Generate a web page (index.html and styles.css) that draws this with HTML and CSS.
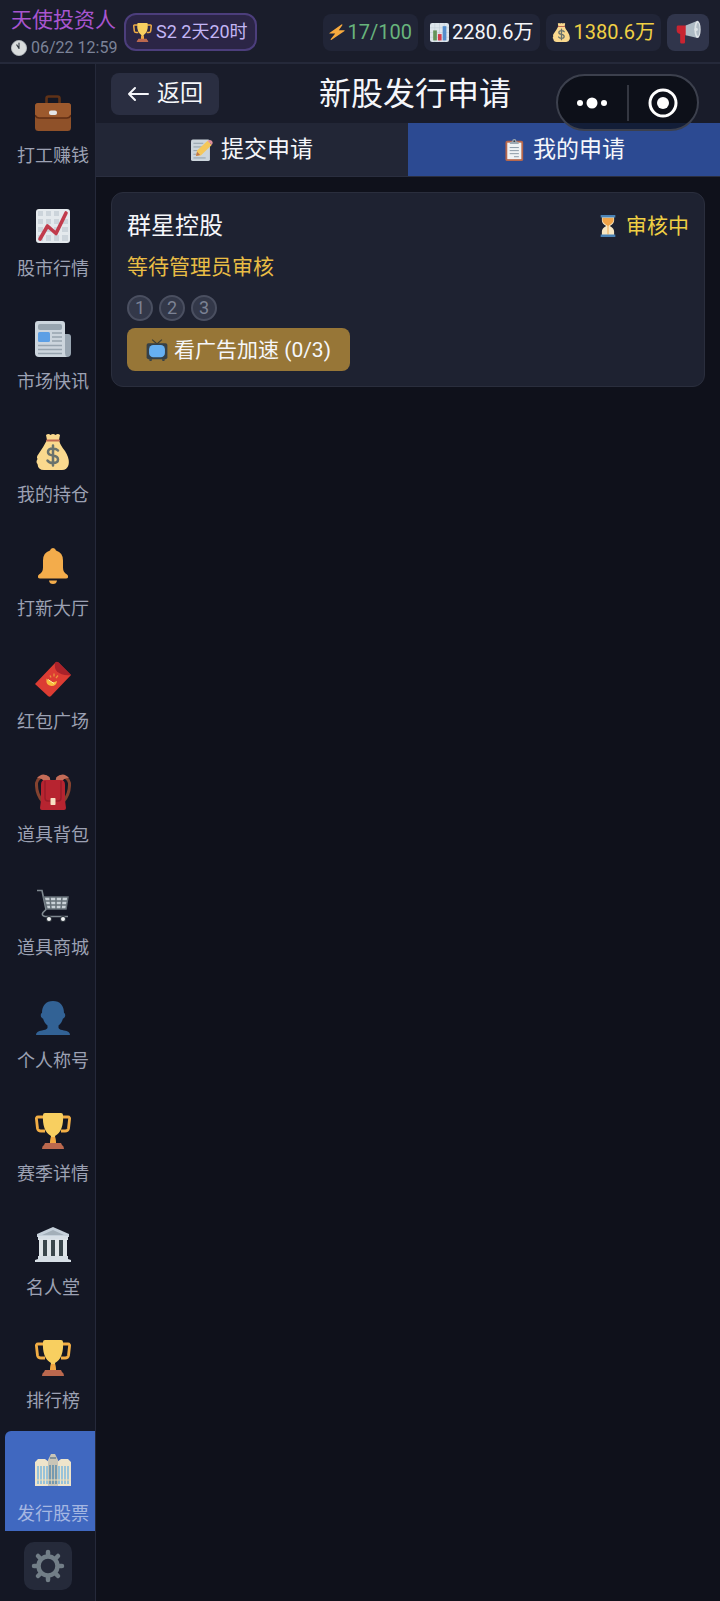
FILE: index.html
```html
<!DOCTYPE html>
<html lang="zh-CN">
<head>
<meta charset="utf-8">
<meta name="viewport" content="width=device-width, initial-scale=1">
<title>新股发行申请</title>
<link rel="stylesheet" href="styles.css">
</head>
<body>
<svg class="sprite" aria-hidden="true">
  <symbol id="briefcase" viewBox="0 0 36 36">
    <path d="M11.500 9V3.500q0-2 2-2h9q2 0 2 2V9" fill="none" stroke="#5f3217" stroke-width="2.600"/>
    <rect y="8" width="36" height="28" rx="3.500" fill="#8f5129"/>
    <path d="M0 11q0-3 3.500-3h29q3.500 0 3.500 3v9q-1 3-4 3H4q-3 0-4-3z" fill="#9c592d"/>
    <path d="M0 20q1 3 4 3h28q3 0 4-3" fill="none" stroke="#5f2d13" stroke-width="1.600"/>
    <rect x="14" y="15.500" width="8" height="4.500" rx="2" fill="#e4e6e8"/>
  </symbol>
  <symbol id="chart" viewBox="0 0 36 36">
    <rect x="1" y="1" width="34" height="34" rx="3" fill="#e4e9ed"/>
    <path d="M3 3h5v5H3zm8 0h5v5h-5zm8 0h5v5h-5zM3 11h5v5H3zm8 0h5v5h-5zm8 0h5v5h-5zm8 0h6v5h-6zM3 19h5v5H3zm8 0h5v5h-5zm8 0h5v5h-5zm8 0h6v5h-6zM3 27h5v6H3zm8 0h5v6h-5zm8 0h5v6h-5zm8 0h6v6h-6z" fill="#ccd4db"/>
    <path d="M5 31l7.500-13 8.500 7.500L31 5" fill="none" stroke="#c13b4c" stroke-width="3.600" stroke-linecap="round" stroke-linejoin="round"/>
  </symbol>
  <symbol id="news" viewBox="0 0 36 36">
    <path d="M26 13h7q3 0 3 3v16q0 4-4 4h-8z" fill="#98a5b1"/>
    <path d="M3 0h24q3 0 3 3v29q0 3 2 4H4q-4 0-4-4V3q0-3 3-3z" fill="#ccd5dd"/>
    <rect x="3" y="3" width="24" height="6" rx="2" fill="#97a4af"/>
    <rect x="3" y="11" width="12" height="10" rx="1.500" fill="#5c9fe5"/>
    <path d="M17 12h10M17 16h10M17 20h10M3 24.500h24M3 28.500h24M3 32.500h24" stroke="#97a4af" stroke-width="1.500"/>
  </symbol>
  <symbol id="bag" viewBox="0 0 36 36">
    <path d="M12 6L11 1q2.500-2 4.500 0 2.500-2 5 0 2.500-2 4.500 0l-1 5q1 5 6 11 5 8 3.500 14-1.500 5-6.500 5H9q-6 0-6.500-6-2-2 0-5-1.500-2 1-5 5-7 8.500-14z" fill="#fad98e"/>
    <path d="M12 6.500h12" stroke="#bf6952" stroke-width="2" stroke-linecap="round"/>
    <path d="M23 16.500q-1.500-2-5-2-5 0-5 3.500 0 2.800 5 3.500t5 4q0 3.500-5 3.500-4 0-5.500-2.500M18 11.500v20" fill="none" stroke="#69726d" stroke-width="2.500" stroke-linecap="round"/>
  </symbol>
  <symbol id="bell" viewBox="0 0 36 36">
    <path d="M18 0q2.500 0 3 2.500 7 2 7 10v7q0 5 4 7 1.500 1 1 3-.5 1-2 1H5q-1.500 0-2-1-.5-2 1-3 4-2 4-7v-7q0-8 7-10Q15.500 0 18 0z" fill="#f3ac4b"/>
    <path d="M14 32.500h8q-.5 3.500-4 3.500t-4-3.500z" fill="#f3ac4b"/>
  </symbol>
  <symbol id="envelope" viewBox="0 0 36 36">
    <path d="M0 23L20 2q2-2 4 0l12 12L16 35q-1.500 1.500-3 0z" fill="#dc3c33"/>
    <path d="M20 2q1.500-2 3.500-.5L36 14q-9 1-14-3.500-3-3.500-2-8.500z" fill="#a9222a"/>
    <path d="M11.500 17.500q-1 7 5 7.500 5 0 5.500-5-3.500 2-6 .5-2.500-1-4.500-3z" fill="#f8bd3e"/>
    <path d="M15 14.500l1 2m3-4v3m4-1l-2 2.500" stroke="#e9923b" stroke-width="1.300"/>
    <path d="M13 18.500l6 4" stroke="#fff0a0"/>
  </symbol>
  <symbol id="backpack" viewBox="0 0 36 36">
    <path d="M8 28Q1 20 1.500 9 3 2 12 2.500M28 28q7-8 6.500-19Q33 2 24 2.500" fill="none" stroke="#84422f" stroke-width="3"/>
    <path d="M2 4q5-6 11-2 3 1 2 6H9Q8 4 2 4zM34 4q-5-6-11-2-3 1-2 6h6q1-4 7-4z" fill="#c46c58"/>
    <path d="M10 6h16q4 0 4 5v15l1 8q0 2-2 2H7q-2 0-2-2l1-8V11q0-5 4-5z" fill="#b72430"/>
    <path d="M10 7v17q0 3 3 3h10q3 0 3-3V7" fill="none" stroke="#981c28" stroke-width="1.400"/>
    <rect x="15.500" y="24" width="5" height="7" rx=".7" fill="#f7dfc3"/>
  </symbol>
  <symbol id="cart" viewBox="0 0 36 36">
    <path d="M2 3.500h5l4 19-3 3q-2 3 2 4h23" fill="none" stroke="#7f8990" stroke-width="1.600"/>
    <path d="M9 10h24l-2 12H12z" fill="#c8d0d6"/>
    <path d="M9 10h24l-2 12H12zM10 14h22M11 18h20M15 10l1 12m5-12v12m6-12l-1 12" fill="none" stroke="#667078" stroke-width="1.500"/>
    <circle cx="14" cy="32" r="3" fill="#343c43"/><circle cx="28" cy="32" r="3" fill="#343c43"/>
    <circle cx="14" cy="32" r="2" fill="#f2f4f5"/><circle cx="28" cy="32" r="2" fill="#f2f4f5"/>
  </symbol>
  <symbol id="person" viewBox="0 0 36 36">
    <path d="M18 1c7 0 11 4.500 11 12 2 .5 1.500 5-1 5.500-1 3.500-2.500 5.500-4.500 7V28c1 1.500 3 2 5.500 2.500 4 .5 6 2 6 4.500H1c0-2.500 2-4 6-4.500 2.500-.5 4.500-1 5.500-2.500v-2.500c-2-1.500-3.500-3.500-4.500-7-2.500-.5-3-5-1-5.500C7 5.500 11 1 18 1z" fill="#326295"/>
  </symbol>
  <symbol id="trophy" viewBox="0 0 36 36">
    <path d="M9 4H3Q1 4 1.500 6.500l1 9Q3 18 6 18h4M27 4h6q2 0 1.500 2.500l-1 9Q33 18 30 18h-4" fill="none" stroke="#f2ae45" stroke-width="2.800"/>
    <path d="M8 2q0-2 2-2h16q2 0 2 2 1 16-8 21l1 7h-6l1-7Q7 18 8 2z" fill="#f8cf60"/>
    <path d="M16 24h4l1 7h-6z" fill="#f2a640"/>
    <path d="M10 30h16l1 2q2 1 2 4H7q0-3 2-4z" fill="#bb684e"/>
  </symbol>
  <symbol id="museum" viewBox="0 0 36 36">
    <path d="M5 11h26v19H5z" fill="#3a464c"/>
    <path d="M18 0l16 7v3H2V7z" fill="#c5d0da"/>
    <path d="M18 3l11 5H7z" fill="#a3afb9"/>
    <path d="M3 9h30v4H3z" fill="#d7dfe6"/>
    <path d="M4 12h4v18H4zm8 0h4v18h-4zm8 0h4v18h-4zm8 0h4v18h-4z" fill="#dfe5e9"/>
    <path d="M3 29h30v3l3 1v2H0v-2l3-1z" fill="#d7dfe6"/>
  </symbol>
  <symbol id="offices" viewBox="0 0 36 36">
    <path d="M0 9l3-3h7l4 3v24H0zm22 0l4-3h7l3 3v24H22z" fill="#eee4cb"/>
    <path d="M3 13v18M6 13v18M9 13v18M12 13v18M24 13v18M27 13v18M30 13v18M33 13v18" stroke="#76b6de" stroke-width="1.400"/>
    <path d="M13 7l3-6h4l3 6v26H13z" fill="#c9c5b7"/>
    <path d="M15 12v19M18 12v19M21 12v19" stroke="#5b8cad" stroke-width="1.500"/>
    <path d="M0 27h36" stroke="#f1dfb7"/><path d="M15 5h6" stroke="#81909a" stroke-width="2"/>
  </symbol>
  <symbol id="gear" viewBox="0 0 36 36">
    <circle cx="18" cy="18" r="9.500" fill="none" stroke="#727e87" stroke-width="4.500"/>
    <path d="M18 6V4M18 30v2M6 18H4M30 18h2M9.500 9.500L8 8M26.500 26.500L28 28M9.500 26.500L8 28M26.500 9.500L28 8" stroke="#727e87" stroke-width="4.500" stroke-linecap="round"/>
  </symbol>
  <symbol id="clock" viewBox="0 0 36 36">
    <circle cx="18" cy="18" r="17" fill="#d9dcdd" stroke="#b3b9be" stroke-width="2"/>
    <path d="M18 19V7M18 19l-5-8" stroke="#303740" stroke-width="2.500" stroke-linecap="round"/>
  </symbol>
  <symbol id="bolt" viewBox="0 0 36 36">
    <path d="M28 1L1 20q-1 1 1 1.500h12L4 34q-1 3 2 1.500l29-20q1-1.500-1-1.500H22l8-11q1-3-2-2z" fill="#f8aa3e"/>
  </symbol>
  <symbol id="bars" viewBox="0 0 36 36">
    <rect width="36" height="36" rx="4" fill="#dde5eb"/>
    <path d="M0 9h36M0 18h36M0 27h36M9 0v36M18 0v36M27 0v36" stroke="#c0ccd6"/>
    <path d="M6 14h7v19H6z" fill="#65945a"/><path d="M15 21h7v12h-7z" fill="#d53c4c"/><path d="M24 6h7v27h-7z" fill="#538ccb"/>
  </symbol>
  <symbol id="megaphone" viewBox="0 0 36 36">
    <path d="M1 10q0-2 2-2h13v14h-3v10q0 2-2 2H8q-2 0-2-2V20q-5-1-5-5z" fill="#c92431"/>
    <path d="M14 8L31 1v25l-17-4z" fill="#aebbc5"/>
    <ellipse cx="31" cy="13.500" rx="4.500" ry="12.500" fill="#dde3e7"/>
    <ellipse cx="31.500" cy="13.500" rx="2.500" ry="9.500" fill="#b0bcc6"/><circle cx="29" cy="13.500" r="2.500" fill="#dde3e7"/>
  </symbol>
  <symbol id="memo" viewBox="0 0 36 36">
    <rect y="1" width="31" height="35" rx="3" fill="#ccd5dc"/>
    <path d="M4 7h16M4 13h14M4 19h9M4 25h4M4 31h20" stroke="#8c9aa5" stroke-width="1.500"/>
    <path d="M8 28l2-9L27 3l7 7-18 17z" fill="#f5c75a"/>
    <path d="M27 3q4-3 7 0t0 7z" fill="#dd8e9b"/><path d="M8 28l2-7 5 5z" fill="#bb7650"/>
  </symbol>
  <symbol id="clipboard" viewBox="0 0 36 36">
    <rect x="4" y="3" width="29" height="33" rx="3" fill="#b7674c"/>
    <path d="M7 6h23v27H7z" fill="#eff2f4"/>
    <path d="M11 8q0-4 4-4 0-4 3.500-4T22 4q4 0 4 4z" fill="#9da9b3"/><circle cx="18.500" cy="3.500" r="1.500" fill="#39424a"/>
    <path d="M11 14h15M11 19h15M11 24h15M18 29h8" stroke="#8998a5" stroke-width="1.600"/>
  </symbol>
  <symbol id="hourglass" viewBox="0 0 36 36">
    <path d="M8 3h20v6q0 5-7 9 7 4 7 9v6H8v-6q0-5 7-9-7-4-7-9z" fill="#f6e7c3"/>
    <path d="M9 5h18v4q0 4-9 9-9-5-9-9z" fill="#f0a347"/><path d="M18 15v17" stroke="#f0a347" stroke-width="1.500"/>
    <path d="M6 0h24v4H6zM6 32h24v4H6z" fill="#4a83b6"/>
  </symbol>
  <symbol id="tv" viewBox="0 0 36 36">
    <path d="M10 1l8 7 8-7" fill="none" stroke="#3b3c36" stroke-width="2"/>
    <rect x="1" y="7" width="34" height="26" rx="3" fill="#364047"/><path d="M5 33h5l-1 3H6zm21 0h5l-1 3h-3z" fill="#364047"/>
    <rect x="5" y="10" width="26" height="20" rx="7" fill="#66b0f3"/>
  </symbol>
</svg>

<div class="app">
  <header class="topbar">
    <div class="player">
      <span class="player-title">天使投资人</span>
      <span class="player-time"><svg class="icon icon-xs"><use href="#clock"/></svg>06/22 12:59</span>
    </div>
    <div class="season"><svg class="icon icon-sm"><use href="#trophy"/></svg>S2 2天20时</div>
    <div class="stats">
      <span class="stat energy"><svg class="icon icon-xs"><use href="#bolt"/></svg>17/100</span>
      <span class="stat"><svg class="icon icon-sm"><use href="#bars"/></svg>2280.6万</span>
      <span class="stat cash"><svg class="icon icon-sm"><use href="#bag"/></svg>1380.6万</span>
      <button class="notice" type="button" aria-label="公告"><svg class="icon icon-lg"><use href="#megaphone"/></svg></button>
    </div>
  </header>

  <div class="body">
    <aside class="sidebar">
      <nav class="menu">
        <a class="menu-item" href="#work"><svg class="icon"><use href="#briefcase"/></svg><span>打工赚钱</span></a>
        <a class="menu-item" href="#market"><svg class="icon"><use href="#chart"/></svg><span>股市行情</span></a>
        <a class="menu-item" href="#flash"><svg class="icon"><use href="#news"/></svg><span>市场快讯</span></a>
        <a class="menu-item" href="#holdings"><svg class="icon"><use href="#bag"/></svg><span>我的持仓</span></a>
        <a class="menu-item" href="#ipo"><svg class="icon"><use href="#bell"/></svg><span>打新大厅</span></a>
        <a class="menu-item" href="#gifts"><svg class="icon"><use href="#envelope"/></svg><span>红包广场</span></a>
        <a class="menu-item" href="#items"><svg class="icon"><use href="#backpack"/></svg><span>道具背包</span></a>
        <a class="menu-item" href="#shop"><svg class="icon"><use href="#cart"/></svg><span>道具商城</span></a>
        <a class="menu-item" href="#titles"><svg class="icon"><use href="#person"/></svg><span>个人称号</span></a>
        <a class="menu-item" href="#season"><svg class="icon"><use href="#trophy"/></svg><span>赛季详情</span></a>
        <a class="menu-item" href="#fame"><svg class="icon"><use href="#museum"/></svg><span>名人堂</span></a>
        <a class="menu-item" href="#ranking"><svg class="icon"><use href="#trophy"/></svg><span>排行榜</span></a>
        <a class="menu-item active" href="#issue" aria-current="page"><svg class="icon"><use href="#offices"/></svg><span>发行股票</span></a>
      </nav>
      <button class="settings" type="button" aria-label="设置"><svg class="icon"><use href="#gear"/></svg></button>
    </aside>

    <main class="content">
      <div class="page-head">
        <button class="back" type="button"><svg class="arrow" viewBox="0 0 22 16"><path d="M21 8H2M8 2L2 8l6 6"/></svg>返回</button>
        <h1 class="page-title">新股发行申请</h1>
        <div class="capsule">
          <button class="capsule-button" type="button" aria-label="更多"><svg class="dots" viewBox="0 0 30 12"><circle cx="3" cy="6" r="3"/><circle cx="15" cy="6" r="5.500"/><circle cx="27" cy="6" r="3"/></svg></button>
          <button class="capsule-button" type="button" aria-label="关闭"><svg class="target" viewBox="0 0 30 30"><circle class="ring" cx="15" cy="15" r="13"/><circle cx="15" cy="15" r="6"/></svg></button>
        </div>
      </div>
      <div class="tabs" role="tablist">
        <button class="tab" type="button" role="tab" aria-selected="false"><svg class="icon icon-md"><use href="#memo"/></svg>提交申请</button>
        <button class="tab selected" type="button" role="tab" aria-selected="true"><svg class="icon icon-md"><use href="#clipboard"/></svg>我的申请</button>
      </div>
      <article class="card">
        <div class="card-head">
          <h2 class="company">群星控股</h2>
          <span class="status"><svg class="icon icon-md"><use href="#hourglass"/></svg>审核中</span>
        </div>
        <p class="waiting">等待管理员审核</p>
        <ol class="steps"><li>1</li><li>2</li><li>3</li></ol>
        <button class="boost" type="button"><svg class="icon icon-md"><use href="#tv"/></svg>看广告加速 (0/3)</button>
      </article>
    </main>
  </div>
</div>
</body>
</html>
```
FILE: styles.css
```css
* { box-sizing: border-box; }

body {
  margin: 0;
  background: #0f111b;
  color: #f5f6fa;
  font-family: Roboto, "Noto Sans CJK SC", sans-serif;
  line-height: 28px;
}

button {
  border: 0;
  padding: 0;
  color: inherit;
  font: inherit;
  cursor: pointer;
}

h1, h2, p, ol { margin: 0; padding: 0; font-weight: inherit; }

.sprite { display: none; }
.icon { width: 36px; height: 36px; flex: none; }
.icon-xs { width: 16px; height: 16px; }
.icon-sm { width: 19px; height: 19px; }
.icon-md { width: 22px; height: 22px; }
.icon-lg { width: 25px; height: 25px; }

.app { display: flex; flex-direction: column; min-height: 100vh; }

.topbar {
  display: flex;
  align-items: center;
  height: 64px;
  padding: 2px 11px 0;
  background: #1a1d2b;
  border-bottom: 2px solid #25293a;
}

.player { display: flex; flex-direction: column; gap: 2px; width: 113px; padding-top: 2px; white-space: nowrap; }
.player-title { color: #a855cf; font-size: 21px; line-height: 28px; }
.player-time { display: flex; align-items: center; gap: 4px; color: #7c8398; font-size: 16px; line-height: 24px; }

.season {
  display: flex;
  align-items: center;
  gap: 4px;
  height: 38px;
  padding: 0 7px;
  border: 2px solid #4c3e7c;
  border-radius: 12px;
  background: #2b2546;
  color: #c3b5f5;
  font-size: 18px;
  white-space: nowrap;
}

.stats { display: flex; gap: 6px; margin-left: auto; }

.stat {
  display: flex;
  align-items: center;
  gap: 3px;
  height: 37px;
  padding: 0 6px;
  border-radius: 8px;
  background: #212537;
  font-size: 20px;
  white-space: nowrap;
}
.energy { color: #68b47c; }
.cash { color: #f0d044; }
.notice { display: grid; place-items: center; width: 42px; height: 37px; border-radius: 8px; background: #30354b; }

.body { display: flex; flex: 1; }

.sidebar {
  display: flex;
  flex-direction: column;
  align-items: center;
  gap: 11px;
  width: 96px;
  padding: 9px 0 11px;
  background: #141724;
  border-right: 1px solid #25293a;
}

.menu { display: flex; flex: 1; flex-direction: column; justify-content: space-between; align-self: stretch; padding-left: 5px; }

.menu-item {
  display: flex;
  flex-direction: column;
  align-items: center;
  gap: 12px;
  padding: 22px 0 4px 6px;
  border-radius: 6px 0 0 0;
  color: #9ca1b3;
  font-size: 18px;
  line-height: 26px;
  text-decoration: none;
  white-space: nowrap;
}
.menu-item.active { background: #4068c0; color: #a5b7e2; }

.settings { display: grid; place-items: center; width: 48px; height: 48px; border-radius: 10px; background: #252a3a; }

.content { flex: 1; min-width: 0; }

.page-head {
  position: relative;
  display: flex;
  align-items: center;
  height: 59px;
  padding: 0 15px;
  background: #191c2a;
}

.back {
  display: flex;
  align-items: center;
  gap: 8px;
  height: 42px;
  padding: 0 16px;
  border-radius: 8px;
  background: #2a2e41;
  font-size: 23px;
}
.arrow { width: 22px; height: 16px; fill: none; stroke: currentColor; stroke-width: 2; stroke-linecap: round; stroke-linejoin: round; }

.page-title { flex: 1; margin-right: 94px; font-size: 32px; line-height: 44px; text-align: center; white-space: nowrap; }

.capsule {
  position: absolute;
  top: 10px;
  right: 21px;
  display: flex;
  align-items: center;
  width: 143px;
  height: 57px;
  border: 2px solid #3c404d;
  border-radius: 29px;
  background: rgba(8, 11, 18, 0.7);
}
.capsule-button { display: grid; flex: 1; place-items: center; height: 36px; background: none; }
.capsule-button + .capsule-button { border-left: 2px solid #343741; }
.dots { width: 30px; height: 12px; fill: #fff; }
.target { width: 30px; height: 30px; fill: #fff; }
.ring { fill: none; stroke: #fff; stroke-width: 3; }

.tabs { display: flex; }
.tab {
  display: flex;
  flex: 1;
  align-items: center;
  justify-content: center;
  gap: 8px;
  height: 54px;
  background: #222636;
  border-bottom: 1px solid #2a2e3f;
  font-size: 23px;
}
.tab.selected { background: #2c4a92; }

.card {
  margin: 15px;
  padding: 15px;
  border: 1px solid #2a2e3d;
  border-radius: 12px;
  background: #1e2231;
}
.card-head { display: flex; align-items: center; justify-content: space-between; }
.company { font-size: 24px; line-height: 36px; }
.status { display: flex; align-items: center; gap: 7px; color: #f0d044; font-size: 21px; line-height: 32px; }
.waiting { padding: 8px 0; color: #e9bd45; font-size: 21px; line-height: 30px; }

.steps { display: flex; gap: 6px; padding: 5px 0 7px; list-style: none; }
.steps li {
  width: 26px;
  height: 26px;
  border: 2px solid #4a4f60;
  border-radius: 50%;
  background: #333849;
  color: #7c8294;
  font-size: 18px;
  line-height: 22px;
  text-align: center;
}

.boost {
  display: flex;
  align-items: center;
  gap: 6px;
  height: 43px;
  padding: 0 19px;
  border-radius: 8px;
  background: #977637;
  font-size: 21px;
  white-space: nowrap;
}
```
